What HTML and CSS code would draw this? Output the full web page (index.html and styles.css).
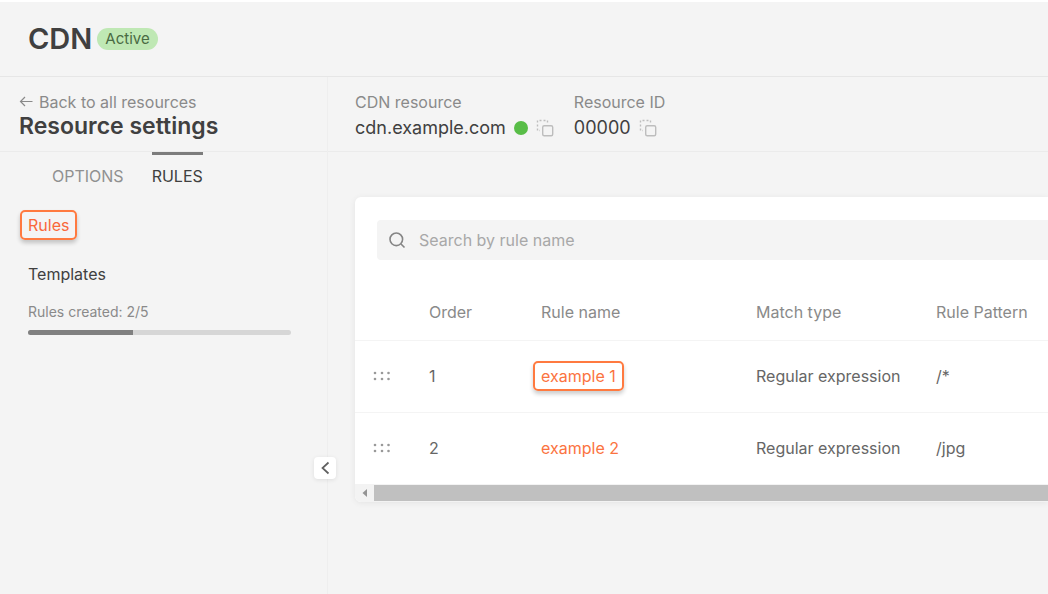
FILE: index.html
```html
<!DOCTYPE html>
<html lang="en">
<head>
<meta charset="utf-8">
<meta name="viewport" content="width=device-width, initial-scale=1">
<title>CDN – Resource settings</title>
<link rel="stylesheet" href="styles.css">
</head>
<body>
<header class="topbar">
  <h1 class="topbar-title">CDN</h1>
  <span class="badge">Active</span>
</header>
<div class="layout">
  <aside class="sidebar">
    <div class="sidebar-head">
      <a class="back" href="#">
        <svg width="14" height="12" viewBox="0 0 14 12" fill="none" stroke="currentColor" stroke-width="1.200" aria-hidden="true"><path d="M13.500 5.500H1.500M6 1 1.500 5.500 6 10"/></svg>
        Back to all resources
      </a>
      <h2 class="sidebar-title">Resource settings</h2>
    </div>
    <nav class="tabs">
      <a class="tab" href="#">OPTIONS</a>
      <a class="tab tab-active" href="#">RULES</a>
    </nav>
    <nav class="menu">
      <a class="outlined" href="#">Rules</a>
      <a class="menu-link" href="#">Templates</a>
    </nav>
    <div class="quota">
      <span id="quota-label">Rules created: 2/5</span>
      <div class="track" role="progressbar" aria-labelledby="quota-label" aria-valuemin="0" aria-valuemax="5" aria-valuenow="2"><div class="fill" style="width:40%"></div></div>
    </div>
    <button class="collapse" type="button" aria-label="Collapse sidebar">
      <svg width="10" height="14" viewBox="0 0 10 14" fill="none" stroke="currentColor" stroke-width="1.700" aria-hidden="true"><path d="M8.500 1.500 2.500 7l6 5.500"/></svg>
    </button>
  </aside>
  <main class="main">
    <div class="resource">
      <div class="field">
        <span class="field-label">CDN resource</span>
        <div class="field-value">cdn.example.com <span class="dot"></span>
          <button class="copy" type="button" aria-label="Copy CDN resource"><svg width="18" height="18" viewBox="0 0 18 18" fill="none" stroke="currentColor" aria-hidden="true"><rect x="6.700" y="6.700" width="10" height="10" rx="1.500" stroke-width="1.400"/><path d="M11.500 3.500V1.500H1.500V11.500H4" stroke-width="1.400" stroke-dasharray="2 2"/></svg></button>
        </div>
      </div>
      <div class="field">
        <span class="field-label">Resource ID</span>
        <div class="field-value">00000
          <button class="copy" type="button" aria-label="Copy resource ID"><svg width="18" height="18" viewBox="0 0 18 18" fill="none" stroke="currentColor" aria-hidden="true"><rect x="6.700" y="6.700" width="10" height="10" rx="1.500" stroke-width="1.400"/><path d="M11.500 3.500V1.500H1.500V11.500H4" stroke-width="1.400" stroke-dasharray="2 2"/></svg></button>
        </div>
      </div>
    </div>
    <section class="card">
      <label class="search">
        <svg width="18" height="18" viewBox="0 0 18 18" fill="none" stroke="currentColor" stroke-width="1.600" aria-hidden="true"><circle cx="8.300" cy="8.300" r="6.300"/><path d="m13 13 3.500 3.500"/></svg>
        <input class="search-input" type="text" placeholder="Search by rule name" aria-label="Search by rule name">
      </label>
      <table class="rules">
        <colgroup><col class="col-drag"><col class="col-order"><col class="col-name"><col class="col-match"><col></colgroup>
        <thead>
          <tr><td></td><th scope="col">Order</th><th scope="col">Rule name</th><th scope="col">Match type</th><th scope="col">Rule Pattern</th></tr>
        </thead>
        <tbody>
          <tr>
            <td class="drag"><svg width="18" height="10" viewBox="0 0 18 10" fill="currentColor" aria-hidden="true"><circle cx="2" cy="2" r="1.300"/><circle cx="9" cy="2" r="1.300"/><circle cx="15.500" cy="2" r="1.300"/><circle cx="2" cy="8" r="1.300"/><circle cx="9" cy="8" r="1.300"/><circle cx="15.500" cy="8" r="1.300"/></svg></td>
            <td>1</td><td><a class="outlined outlined-cell" href="#">example 1</a></td><td>Regular expression</td><td>/*</td>
          </tr>
          <tr>
            <td class="drag"><svg width="18" height="10" viewBox="0 0 18 10" fill="currentColor" aria-hidden="true"><circle cx="2" cy="2" r="1.300"/><circle cx="9" cy="2" r="1.300"/><circle cx="15.500" cy="2" r="1.300"/><circle cx="2" cy="8" r="1.300"/><circle cx="9" cy="8" r="1.300"/><circle cx="15.500" cy="8" r="1.300"/></svg></td>
            <td>2</td><td><a class="rule-link" href="#">example 2</a></td><td>Regular expression</td><td>/jpg</td>
          </tr>
        </tbody>
      </table>
      <div class="scrollbar" aria-hidden="true">
        <svg width="19" height="16" viewBox="0 0 19 16"><path d="M12 4v8L7.500 8z" fill="#949494"/></svg>
        <div class="thumb"></div>
      </div>
    </section>
  </main>
</div>
</body>
</html>
```
FILE: styles.css
```css
* { box-sizing: border-box; }
body {
  margin: 0;
  min-height: 100vh;
  display: flex;
  flex-direction: column;
  overflow-x: hidden;
  background: #f4f4f4;
  border-top: 2px solid #fff;
  color: #404040;
  font: 16px/20px Inter, "Liberation Sans", sans-serif;
}
a { color: inherit; text-decoration: none; }
button { padding: 0; border: 0; background: none; color: inherit; cursor: pointer; }
svg { display: block; flex: none; }
h1, h2 { margin: 0; }

.topbar {
  display: flex;
  align-items: center;
  gap: 5px;
  height: 75px;
  padding: 0 28px;
  border-bottom: 1px solid #e6e6e6;
}
.topbar-title { font-size: 29px; line-height: 36px; font-weight: 600; }
.badge {
  padding: 0 8px;
  border-radius: 11px;
  background: #bfe8b4;
  color: #4a6b43;
  font-size: 15px;
  line-height: 22px;
}

.layout { flex: 1; display: grid; grid-template-columns: 328px minmax(0, 1fr); }
.sidebar { position: relative; border-right: 1px solid #eeeeee; }
.sidebar-head { height: 75px; padding: 15px 19px 0; border-bottom: 1px solid #ebebeb; }
.back { display: flex; align-items: center; gap: 6px; color: #8a8a8a; }
.sidebar-title { font-size: 23px; line-height: 28px; font-weight: 600; }

.tabs { display: flex; gap: 28px; padding-left: 52px; }
.tab { padding-top: 11px; border-top: 3px solid transparent; color: #909090; }
.tab-active { border-color: #7c7c7c; color: #404040; }

.menu { display: flex; flex-direction: column; align-items: flex-start; gap: 24px; padding: 24px 20px 0; }
.menu-link { padding-left: 8px; }
.outlined {
  display: inline-block;
  padding: 3px 6px;
  border: 2px solid #ff7a40;
  border-radius: 5px;
  box-shadow: 0 3px 4px #0003;
  color: #f9683a;
}
.outlined-cell { margin-left: -8px; }

.quota {
  display: grid;
  gap: 8px;
  padding: 18px 36px 0 28px;
  color: #8a8a8a;
  font-size: 14px;
}
.track { height: 5px; border-radius: 3px; background: #d6d6d6; overflow: hidden; }
.fill { height: 100%; background: #808080; }
.collapse {
  position: absolute;
  top: 380px;
  right: -9px;
  display: grid;
  place-items: center;
  width: 22px;
  height: 22px;
  border-radius: 4px;
  background: #fff;
  box-shadow: 0 1px 4px #00000018;
  color: #606060;
}

.resource {
  display: flex;
  gap: 20px;
  height: 75px;
  padding: 15px 27px 0;
  border-bottom: 1px solid #ebebeb;
}
.field-label { color: #8a8a8a; }
.field-value { display: flex; align-items: center; gap: 8px; font-size: 18px; line-height: 32px; }
.dot { width: 14px; height: 14px; border-radius: 50%; background: #58bd47; }
.copy { color: #bdbdbd; }

.card {
  margin: 45px 0 0 27px;
  padding-top: 23px;
  border-radius: 6px 0 0 6px;
  background: #fff;
  box-shadow: 0 1px 6px #00000012;
  overflow: hidden;
}
.search {
  display: flex;
  align-items: center;
  gap: 13px;
  height: 40px;
  margin-left: 22px;
  padding-left: 11px;
  border-radius: 4px 0 0 4px;
  background: #f4f4f4;
  color: #858585;
}
.search-input { flex: 1; min-width: 0; padding: 0; border: 0; outline: 0; background: none; color: #3a3a3a; font: inherit; }
.search-input::placeholder { color: #a8a8a8; opacity: 1; }

.rules { width: 100%; margin-top: 24px; border-collapse: collapse; table-layout: fixed; }
.col-drag { width: 74px; }
.col-order { width: 112px; }
.col-name { width: 215px; }
.col-match { width: 180px; }
.rules th, .rules td { padding: 0; text-align: left; white-space: nowrap; font-weight: 400; color: #666; }
.rules th { height: 56px; color: #8a8a8a; }
.rules td { height: 72px; }
.rules thead td { height: 56px; }
.rules tbody tr { border-top: 1px solid #f4f4f4; }
.rules .drag { padding-left: 18px; color: #999; }
.rules .outlined, .rules .rule-link { color: #fb7340; }

.scrollbar { display: flex; align-items: center; height: 18px; background: #f3f3f3; }
.thumb { flex: 1; height: 16px; background: #c0c0c0; }
```
